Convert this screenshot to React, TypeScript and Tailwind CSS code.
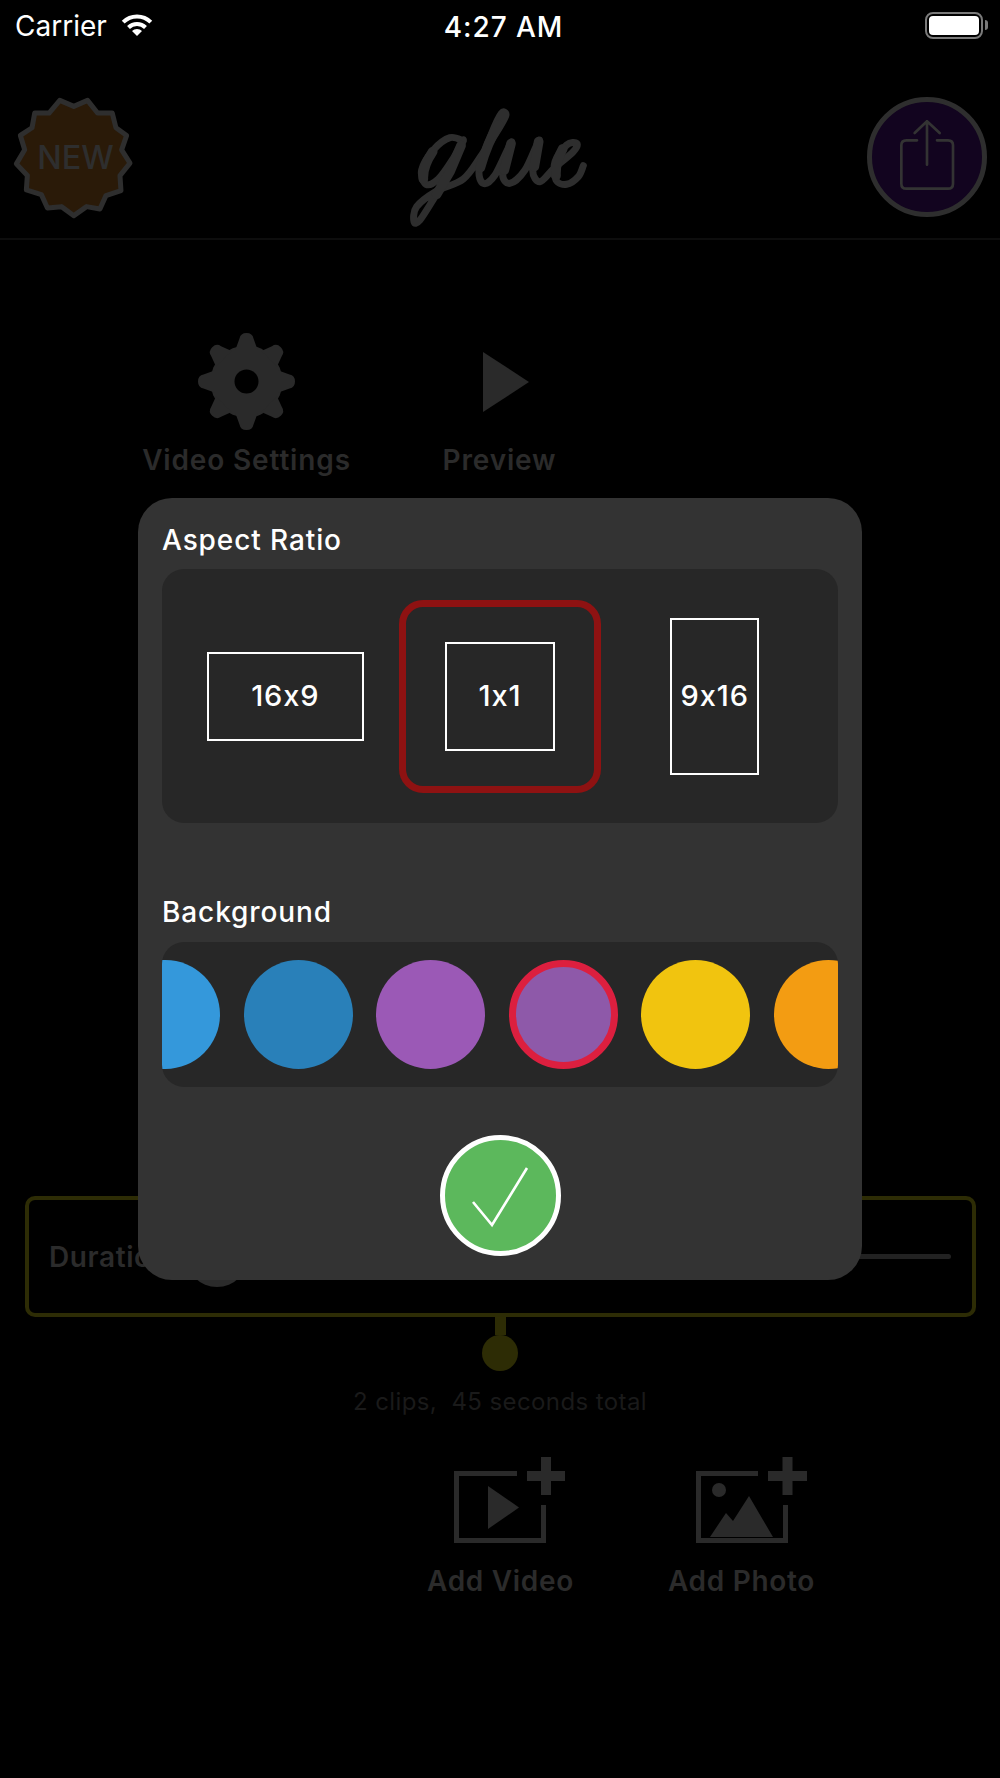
import React from "react";

const swatches = ["bg-[#3498db]", "bg-[#2980b9]", "bg-[#9b59b6]", "bg-[#8e59a9]", "bg-[#f1c40f]", "bg-[#f39c12]"];

// catmull-rom through the points, used for the hand-traced logo line
function smooth(p: number[][]): string {
  let d = `M${p[0][0]} ${p[0][1]}`;
  for (let i = 0; i < p.length - 1; i++) {
    const a = p[Math.max(i - 1, 0)];
    const b = p[i];
    const c = p[i + 1];
    const e = p[Math.min(i + 2, p.length - 1)];
    d += ` C${b[0] + (c[0] - a[0]) / 6} ${b[1] + (c[1] - a[1]) / 6} ${c[0] - (e[0] - b[0]) / 6} ${c[1] - (e[1] - b[1]) / 6} ${c[0]} ${c[1]}`;
  }
  return d;
}

const glueLine = smooth([
  [190, 108], [150, 98], [100, 135], [65, 195], [78, 238], [115, 222], [160, 160], [190, 105],
  [150, 200], [105, 275], [60, 345], [42, 350], [50, 305], [110, 258], [190, 222], [245, 150],
  [300, 65], [318, 30], [304, 25], [275, 85], [238, 190], [250, 235], [285, 210], [335, 110],
  [308, 205], [330, 235], [375, 195], [418, 105], [398, 195], [420, 230], [462, 190], [520, 140],
  [530, 115], [500, 120], [465, 170], [468, 225], [500, 238], [535, 215], [550, 182],
]);

// the heavier downstrokes of the script
const glueHeavy = "M183 122L150 200L110 268M98 140Q68 185 70 222M296 60Q262 112 241 188M333 116L313 195M416 110L403 185M488 132Q466 170 468 212";

function Wifi() {
  return (
    <svg width="34" height="22" viewBox="0 0 34 22" className="ml-[13px] -mt-[2px]">
      <path d="M3.2 8.2A19.5 19.5 0 0 1 30.8 8.2" fill="none" stroke="#fff" strokeWidth="4" />
      <path d="M8.5 13.5A12 12 0 0 1 25.5 13.5" fill="none" stroke="#fff" strokeWidth="4" />
      <path d="M17 22L12 17A7 7 0 0 1 22 17Z" fill="#fff" />
    </svg>
  );
}

function Battery() {
  return (
    <div className="flex items-center -mt-[2px]">
      <div className="w-[58px] h-[27px] rounded-[8px] border-2 border-[#7a7a7a] p-[2px]">
        <div className="w-full h-full rounded-[4px] bg-white" />
      </div>
      <div className="w-[3px] h-[10px] ml-[2px] rounded-r-full bg-[#7a7a7a]" />
    </div>
  );
}

function Badge() {
  return (
    <svg width="122" height="122" viewBox="25 20 365 365" className="shrink-0">
      <polygon
        points="165,30 207,48 248,30 278,68 322,68 333,112 365,135 350,178 375,218 345,255 348,300 303,315 285,355 245,348 207,375 170,348 128,352 110,312 65,298 68,255 35,220 60,178 47,135 82,112 90,68 133,68"
        fill="#2a1a08"
        stroke="#2e2e2e"
        strokeWidth="15"
        strokeLinejoin="round"
      />
      <text x="212" y="234" textAnchor="middle" fill="#2e2e2e" fontSize="97" fontWeight="500" fontFamily="Inter, sans-serif">
        NEW
      </text>
    </svg>
  );
}

function ShareButton() {
  return (
    <div className="w-[120px] h-[120px] rounded-full border-[5px] border-[#2e2e2e] bg-[#12041f] flex items-center justify-center">
      <svg width="110" height="110" viewBox="37 37 330 330" fill="none" stroke="#333" strokeWidth="8" strokeLinecap="round" strokeLinejoin="round">
        <path d="M172 152H140Q125 152 125 167V282Q125 297 140 297H265Q280 297 280 282V167Q280 152 265 152H232" />
        <path d="M202 225V95M165 130L202 95L240 130" />
      </svg>
    </div>
  );
}

function Gear() {
  return (
    <svg width="97" height="97" viewBox="-48.5 -48.5 97 97">
      <circle r="36" fill="#2a2a2a" />
      {[0, 45, 90, 135, 180, 225, 270, 315].map((a) => (
        <path key={a} d="M-11 -32L-7 -43Q-6 -48.5 0 -48.5Q6 -48.5 7 -43L11 -32Z" fill="#2a2a2a" transform={`rotate(${a})`} />
      ))}
      <circle r="12" fill="#000" />
    </svg>
  );
}

function Action({ icon, label }: { icon: React.ReactNode; label: string }) {
  return (
    <div className="w-[253px] flex flex-col items-center">
      <div className="h-[97px] flex items-center justify-center">{icon}</div>
      <div className="mt-[13px] text-[28px] leading-[34px] font-semibold tracking-[0.85px] text-[#2b2b2b]">{label}</div>
    </div>
  );
}

function AddItem({ viewBox, children, label }: { viewBox: string; children: React.ReactNode; label: string }) {
  return (
    <div className="w-[241px] flex flex-col items-center">
      <svg width="131" height="86" viewBox={viewBox} fill="#2a2a2a">
        {children}
      </svg>
      <div className="mt-[21px] text-[28px] leading-[34px] font-semibold tracking-[0.7px] text-[#2b2b2b]">{label}</div>
    </div>
  );
}

function Ratio({ label, size }: { label: string; size: string }) {
  return (
    <div className={`${size} border-2 border-white flex items-center justify-center text-[29px] font-medium tracking-[0.9px] text-white`}>
      {label}
    </div>
  );
}

function Modal() {
  return (
    <div className="absolute left-[138px] top-[498px] w-[724px] h-[782px] rounded-[34px] bg-[#333333] px-6 pt-[25px] text-white">
      <div className="text-[28px] leading-[34px] font-medium tracking-[0.9px]">Aspect Ratio</div>
      <div className="mt-3 h-[254px] rounded-[22px] bg-[#272727] px-4 grid grid-cols-3 items-center justify-items-center">
        <Ratio label="16x9" size="w-[157px] h-[89px]" />
        <div className="w-[202px] h-[193px] rounded-[24px] border-[7px] border-[#8e1212] flex items-center justify-center">
          <Ratio label="1x1" size="w-[110px] h-[109px]" />
        </div>
        <Ratio label="9x16" size="w-[89px] h-[157px]" />
      </div>

      <div className="mt-[72px] text-[28px] leading-[34px] font-medium tracking-[0.9px]">Background</div>
      <div className="mt-[13px] h-[145px] rounded-[22px] bg-[#272727] overflow-hidden flex items-center gap-[23.6px]">
        {swatches.map((c, i) => (
          <div
            key={c}
            className={`shrink-0 w-[109px] h-[109px] rounded-full ${c} ${i === 0 ? "-ml-[51px]" : ""} ${i === 3 ? "border-[7px] border-[#dc1f3f]" : ""}`}
          />
        ))}
      </div>

      <div className="mt-12 mx-auto w-[121px] h-[121px] rounded-full border-[5px] border-white bg-[#5cb85c]">
        <svg className="w-full h-full" viewBox="445 1140 111 111" fill="none" stroke="#fff" strokeWidth="2.6" strokeLinejoin="miter">
          <path d="M473 1202L492 1225L527 1168" />
        </svg>
      </div>
    </div>
  );
}

export default function App() {
  return (
    <div className="relative w-full h-[1778px] overflow-hidden bg-black [font-family:Inter,sans-serif] [font-feature-settings:'calt'_0]">
      {/* status bar */}
      <div className="h-[52px] grid grid-cols-3 items-center text-white text-[28px]">
        <div className="flex items-center pl-[15px]">
          <span>Carrier</span>
          <Wifi />
        </div>
        <div className="text-center font-medium tracking-[0.9px] pt-[2px] pl-[7px]">4:27 AM</div>
        <div className="flex justify-end pr-3">
          <Battery />
        </div>
      </div>

      {/* header */}
      <div className="h-[188px] border-b-2 border-[#0d0d0d] pl-[13px] pr-[13px] pt-[45px] grid grid-cols-[387px_195px_1fr] items-start">
        <Badge />
        <svg width="195" height="130" viewBox="0 0 585 390" className="mt-2" fill="none" stroke="#2e2e2e" strokeWidth="21" strokeLinecap="round" strokeLinejoin="round">
          <path d={glueLine} />
          <path d={glueHeavy} strokeWidth="29" />
        </svg>
        <div className="flex justify-end">
          <ShareButton />
        </div>
      </div>

      {/* actions */}
      <div className="mt-[93px] pl-[120px] flex">
        <Action icon={<Gear />} label="Video Settings" />
        <Action
          icon={
            <svg width="60" height="60" viewBox="0 0 60 60" className="translate-x-[6px]">
              <polygon points="7,0 53,30 7,60" fill="#2a2a2a" />
            </svg>
          }
          label="Preview"
        />
      </div>

      {/* duration */}
      <div className="mt-[719px] ml-[25px] w-[951px] h-[121px] rounded-[10px] border-4 border-[#2d2c05] pl-5 pr-[21px] flex items-center">
        <span className="text-[28px] font-semibold tracking-[0.6px] text-[#2b2b2b] w-[131px]">Duration</span>
        <div className="relative flex-1 h-[5px] rounded-full bg-[#222222]">
          <div className="absolute left-[6px] -top-[29px] w-[62px] h-[62px] rounded-full bg-[#2b2b2b]" />
        </div>
      </div>
      <div className="flex flex-col items-center">
        <div className="w-[11px] h-[18px] bg-[#2d2c05]" />
        <div className="w-[36px] h-[36px] rounded-full bg-[#2d2c05]" />
        <div className="mt-4 text-[24px] leading-[30px] tracking-[0.4px] text-[#1a1a1a] whitespace-pre">2 clips,  45 seconds total</div>
      </div>

      {/* add media */}
      <div className="mt-10 pl-[380px] flex">
        <AddItem viewBox="435 1457 131 86" label="Add Video">
          <path d="M517 1473.5H456.5V1540.5H543.5V1505" fill="none" stroke="#2a2a2a" strokeWidth="5" />
          <polygon points="488,1486 519,1507.5 488,1529" />
          <path d="M541 1457H551V1471H565V1481H551V1495H541V1481H527V1471H541Z" />
        </AddItem>
        <AddItem viewBox="676 1457 131 86" label="Add Photo">
          <path d="M758 1473.5H698.5V1540.5H785.5V1505" fill="none" stroke="#2a2a2a" strokeWidth="5" />
          <circle cx="719" cy="1490" r="7" />
          <polygon points="710,1537 726,1513 733,1521 749,1496 773,1537" />
          <path d="M782.5 1457H792.5V1471H807V1481H792.5V1495H782.5V1481H768V1471H782.5Z" />
        </AddItem>
      </div>

      <Modal />
    </div>
  );
}
